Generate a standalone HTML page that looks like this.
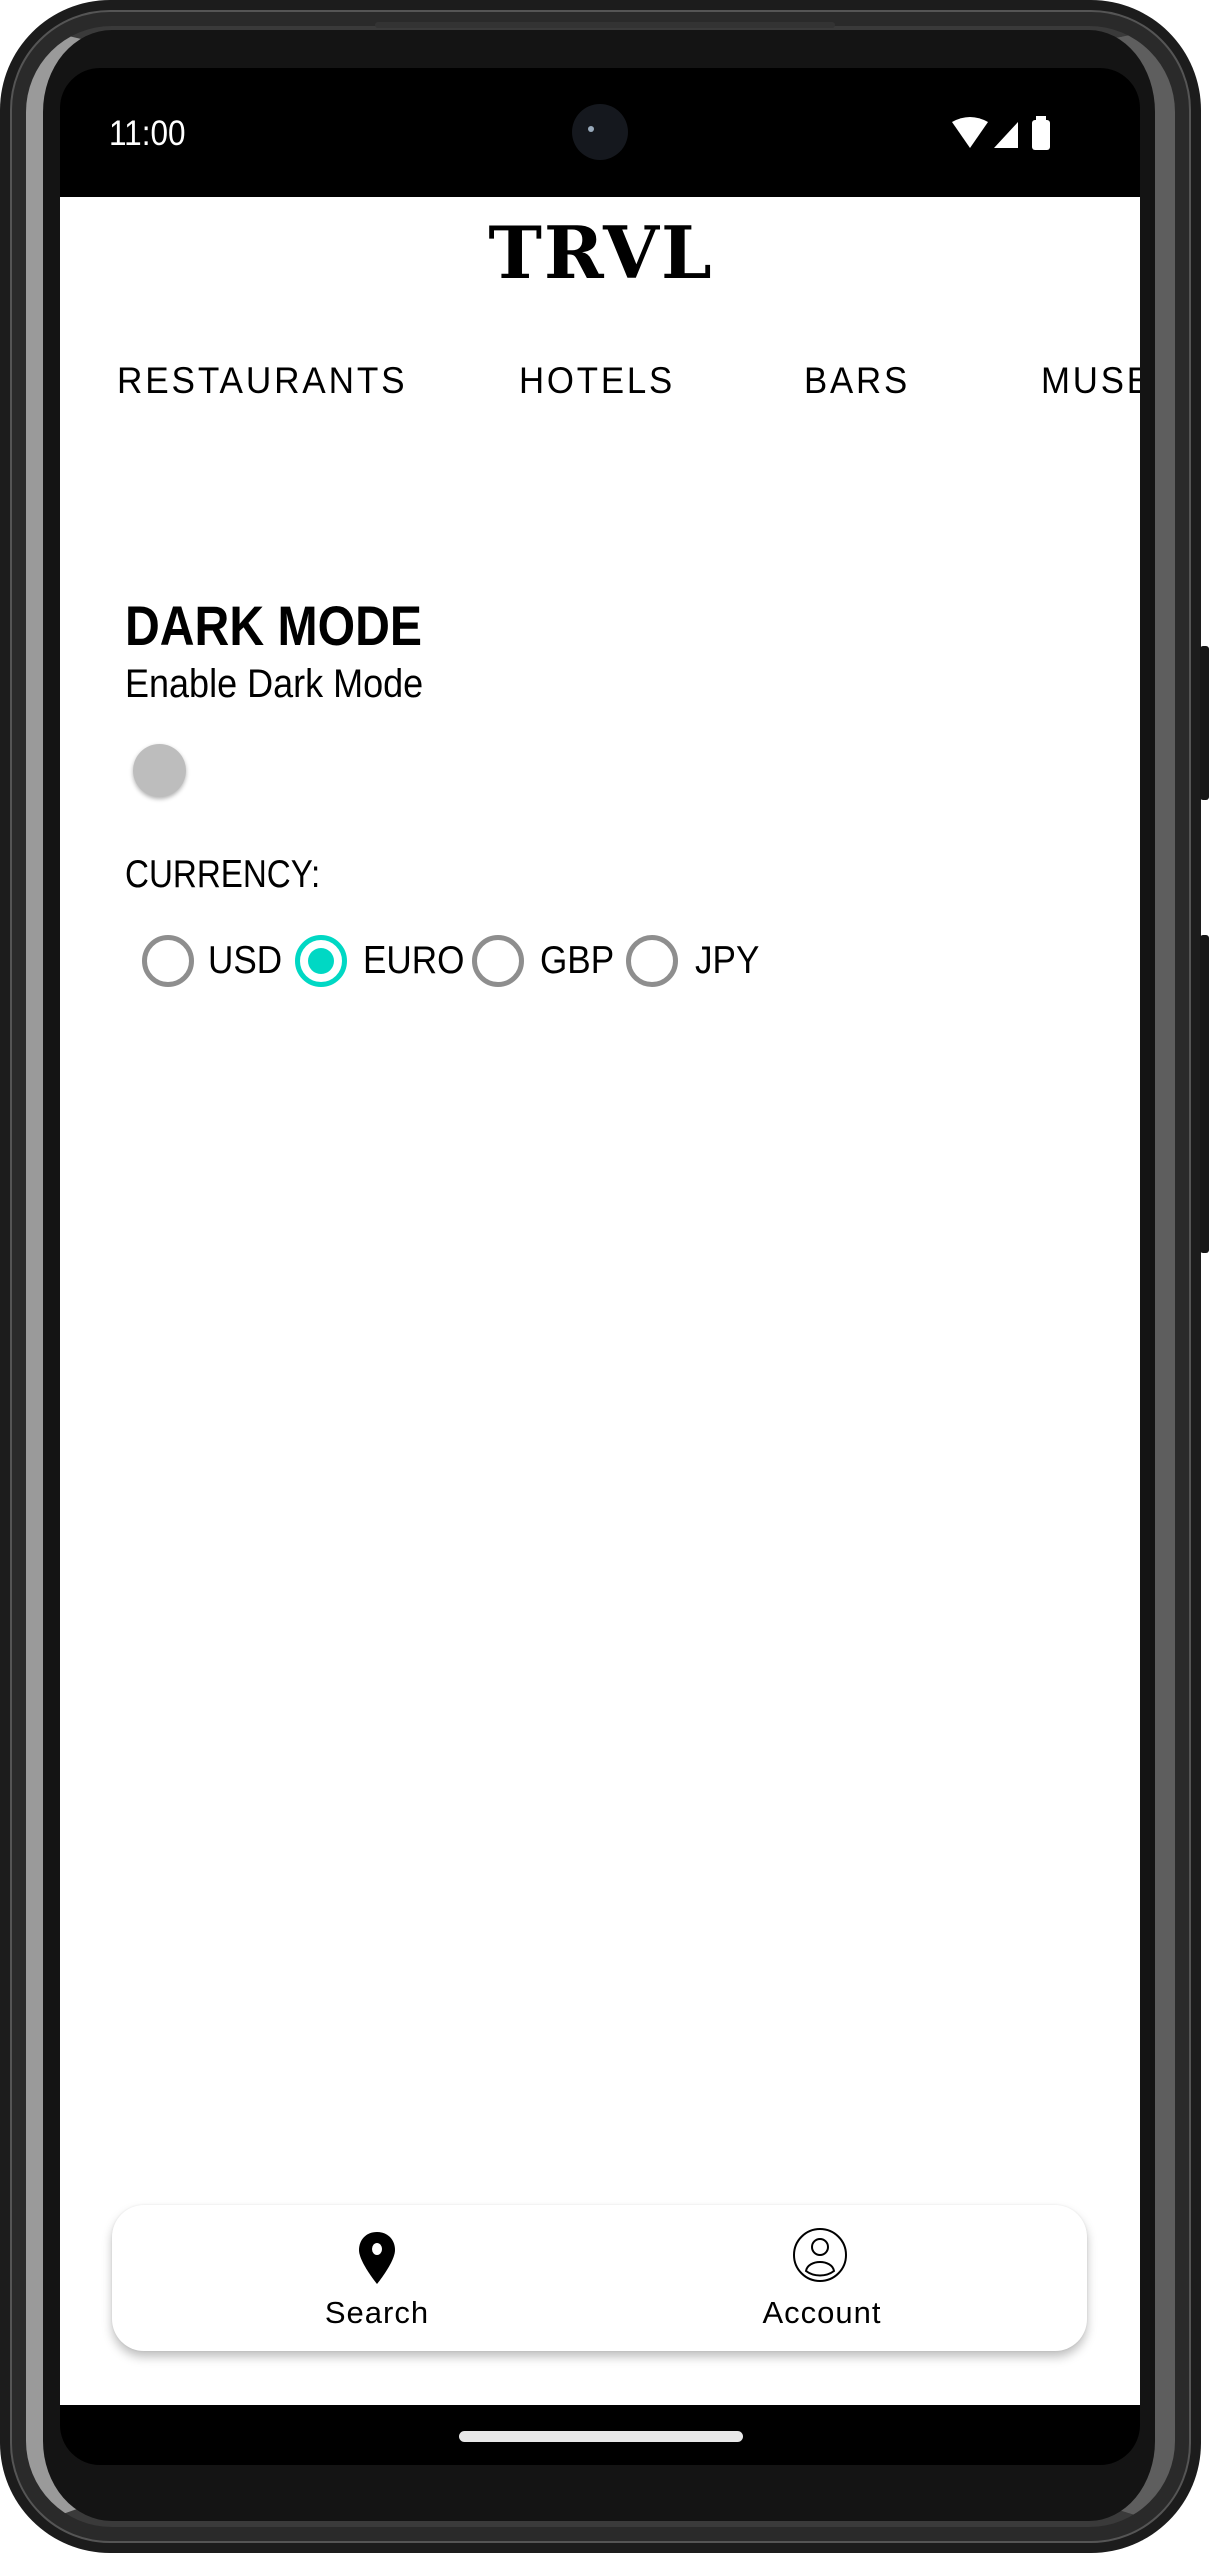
<!DOCTYPE html>
<html><head><meta charset="utf-8"><style>
*{margin:0;padding:0;box-sizing:border-box}
body{width:1209px;height:2553px;background:#fff;position:relative;overflow:hidden;font-family:"Liberation Sans",sans-serif}
.abs{position:absolute}
#body{left:0;top:0;width:1201px;height:2553px;border-radius:110px;background:#1c1c1c}
#rim1{left:10px;top:10px;width:1181px;height:2533px;border-radius:100px;background:#2a2a2a;border:2px solid #555}
#rim2{left:26px;top:26px;width:1149px;height:2501px;border-radius:86px;background:#141414;border-left:17px solid #9a9a9a;border-right:20px solid #5e5e5e;border-top:4px solid #3a3a3a;border-bottom:6px solid #3a3a3a}
#screen{left:60px;top:68px;width:1080px;height:2397px;border-radius:40px;background:#000;overflow:hidden}
#white{left:0;top:129px;width:1080px;height:2208px;background:#fff;overflow:hidden}
.btn{background:#161616;border-radius:3px;width:9px;left:1200px}
.t{position:absolute;white-space:nowrap;color:#000;transform-origin:left center}
.c{transform:scaleX(0.9)}
</style></head><body>
<div id="body" class="abs"></div>
<div id="rim1" class="abs"></div>
<div id="rim2" class="abs"></div>
<div class="abs btn" style="top:646px;height:154px"></div>
<div class="abs btn" style="top:935px;height:318px"></div>
<div class="abs" style="left:375px;top:22px;width:460px;height:6px;border-radius:3px;background:#333"></div>
<div id="screen" class="abs">
  <div class="t c" style="left:49px;top:46px;font-size:35px;color:#fff">11:00</div>
  <div class="abs" style="left:512px;top:36px;width:56px;height:56px;border-radius:50%;background:#15181e"></div>
  <div class="abs" style="left:528px;top:58px;width:6px;height:6px;border-radius:50%;background:#9ab"></div>
  <svg class="abs" style="left:890px;top:48px" width="110" height="40" viewBox="0 0 110 40">
    <path d="M2 6 Q20 -4 38 6 L20 32 Z" fill="#fff"/>
    <path d="M44 32 L68 6 L68 32 Z" fill="#fff"/>
    <rect x="82" y="4" width="18" height="30" rx="3" fill="#fff"/>
    <rect x="86" y="0" width="10" height="5" fill="#fff"/>
  </svg>
  <div id="white" class="abs">
    <div class="t" style="left:0;width:1080px;text-align:center;top:14px;font-family:'DejaVu Serif',serif;font-weight:bold;font-size:72px;letter-spacing:2px;line-height:84px;padding-left:2px">TRVL</div>
    <div class="t" style="left:57px;top:163px;font-size:37px;letter-spacing:3px;line-height:42px;transform:scaleX(0.95)">RESTAURANTS</div>
    <div class="t" style="left:459px;top:163px;font-size:37px;letter-spacing:3px;line-height:42px;transform:scaleX(0.94)">HOTELS</div>
    <div class="t" style="left:744px;top:163px;font-size:37px;letter-spacing:3px;line-height:42px;transform:scaleX(0.94)">BARS</div>
    <div class="t" style="left:981px;top:163px;font-size:37px;letter-spacing:3px;line-height:42px;transform:scaleX(0.94)">MUSEUMS</div>
    <div class="t" style="left:65px;top:397px;font-size:56px;font-weight:bold;line-height:64px;transform:scaleX(0.86)">DARK MODE</div>
    <div class="t" style="left:65px;top:464px;font-size:40px;line-height:46px;transform:scaleX(0.9)">Enable Dark Mode</div>
    <div class="abs" style="left:73px;top:547px;width:53px;height:53px;border-radius:50%;background:#bdbdbd;box-shadow:0 2px 4px rgba(0,0,0,.3)"></div>
    <div class="t" style="left:65px;top:655px;font-size:39px;line-height:46px;transform:scaleX(0.85)">CURRENCY:</div>
    <div class="abs" style="left:82px;top:738px;width:52px;height:52px;border-radius:50%;border:5px solid #8e8e8e"></div>
    <div class="t c" style="left:148px;top:741px;font-size:39px;line-height:46px">USD</div>
    <div class="abs" style="left:235px;top:738px;width:52px;height:52px;border-radius:50%;border:5px solid #00d8c4"></div>
    <div class="abs" style="left:248px;top:751px;width:26px;height:26px;border-radius:50%;background:#00d8c4"></div>
    <div class="t c" style="left:303px;top:741px;font-size:39px;line-height:46px">EURO</div>
    <div class="abs" style="left:412px;top:738px;width:52px;height:52px;border-radius:50%;border:5px solid #8e8e8e"></div>
    <div class="t c" style="left:480px;top:741px;font-size:39px;line-height:46px">GBP</div>
    <div class="abs" style="left:566px;top:738px;width:52px;height:52px;border-radius:50%;border:5px solid #8e8e8e"></div>
    <div class="t c" style="left:635px;top:741px;font-size:39px;line-height:46px">JPY</div>
    <div class="abs" style="left:52px;top:2008px;width:975px;height:146px;border-radius:32px;background:#fff;box-shadow:0 6px 10px rgba(0,0,0,.25),0 0 2px rgba(0,0,0,.08)">
      <svg class="abs" style="left:245px;top:25px" width="40" height="56" viewBox="0 0 40 56"><path d="M20 2 C9 2 2 10 2 20 C2 32 20 54 20 54 C20 54 38 32 38 20 C38 10 31 2 20 2 Z" fill="#000"/><ellipse cx="20" cy="19" rx="5" ry="6" fill="#fff"/></svg>
      <div class="t" style="left:0;width:530px;text-align:center;top:90px;font-size:31px;letter-spacing:1px">Search</div>
      <svg class="abs" style="left:680px;top:22px" width="56" height="56" viewBox="0 0 56 56" fill="none" stroke="#000" stroke-width="2"><circle cx="28" cy="28" r="26"/><circle cx="28" cy="20" r="8"/><path d="M14 44 C16 32 40 32 42 44 C34 50 22 50 14 44 Z"/></svg>
      <div class="t" style="left:445px;width:530px;text-align:center;top:90px;font-size:31px;letter-spacing:1px">Account</div>
    </div>
  </div>
  <div class="abs" style="left:399px;top:2363px;width:284px;height:11px;border-radius:6px;background:#e8e8e8"></div>
</div>
</body></html>
